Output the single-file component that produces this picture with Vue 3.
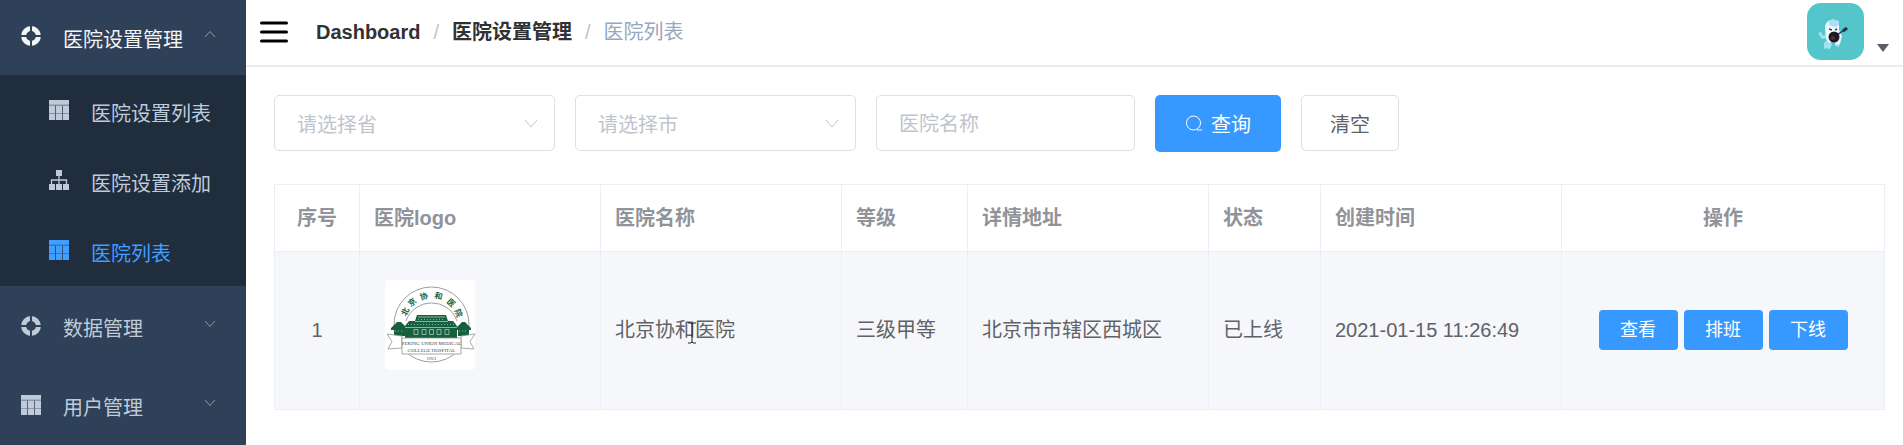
<script setup>
import { ref } from 'vue'

const province = ref('')
const city = ref('')
const hospitalName = ref('')

const groups = [
  {
    title: '医院设置管理',
    icon: 'ring',
    open: true,
    children: [
      { title: '医院设置列表', icon: 'table' },
      { title: '医院设置添加', icon: 'tree' },
      { title: '医院列表', icon: 'table', active: true },
    ],
  },
  { title: '数据管理', icon: 'ring', open: false, children: [] },
  { title: '用户管理', icon: 'table', open: false, children: [] },
]

const rows = [
  {
    id: 1,
    name: '北京协和医院',
    level: '三级甲等',
    address: '北京市市辖区西城区',
    status: '已上线',
    created: '2021-01-15 11:26:49',
  },
]

const sealChars = [
  { text: '北', angle: -64 },
  { text: '京', angle: -41 },
  { text: '协', angle: -15 },
  { text: '和', angle: 14 },
  { text: '医', angle: 42 },
  { text: '院', angle: 67 },
]
</script>

<template>
  <div class="layout">
    <nav class="sidebar">
      <section v-for="group in groups" :key="group.title">
        <button type="button" class="group" :class="{ open: group.open }">
          <svg v-if="group.icon === 'ring'" class="icon" viewBox="0 0 20 20">
            <circle cx="10" cy="10" r="7.4" fill="none" stroke="currentColor" stroke-width="5" />
            <path class="ring-gap" d="M10 0v6M10 14v6M0 10h6M14 10h6" />
          </svg>
          <svg v-else class="icon" viewBox="0 0 20 20">
            <path fill="currentColor" opacity=".65" d="M0 0h20v20H0z" />
            <path fill="currentColor" d="M0 0h20v4.500H0zM0 6h6v7H0zM7 6h6v7H7zM14 6h6v7h-6zM0 14h6v6H0zM7 14h6v6H7zM14 14h6v6h-6z" />
            <path class="icon-line" d="M6.500 5.500V20M13.500 5.500V20" />
          </svg>
          <span class="label">{{ group.title }}</span>
          <svg class="arrow" viewBox="0 0 12 8">
            <path :d="group.open ? 'M1 7l5-5.500L11 7' : 'M1 1l5 5.500L11 1'" />
          </svg>
        </button>
        <div v-if="group.children.length" class="submenu">
          <a v-for="item in group.children" :key="item.title" href="#" class="item" :class="{ active: item.active }">
            <svg v-if="item.icon === 'table'" class="icon" viewBox="0 0 20 20">
              <path fill="currentColor" opacity=".65" d="M0 0h20v20H0z" />
              <path fill="currentColor" d="M0 0h20v4.500H0zM0 6h6v7H0zM7 6h6v7H7zM14 6h6v7h-6zM0 14h6v6H0zM7 14h6v6H7zM14 14h6v6h-6z" />
              <path class="icon-line" d="M6.500 5.500V20M13.500 5.500V20" />
            </svg>
            <svg v-else class="icon" viewBox="0 0 20 20">
              <path fill="currentColor" d="M7 0h6v6H7zM0 14h6v6H0zM7 14h6v6H7zM14 14h6v6h-6z" />
              <path fill="none" stroke="currentColor" stroke-width="1.300" d="M10 6v8M2.500 14v-4h15v4" />
            </svg>
            <span class="label">{{ item.title }}</span>
          </a>
        </div>
      </section>
    </nav>

    <div class="main">
      <header class="navbar">
        <button type="button" class="toggle" aria-label="切换菜单">
          <svg viewBox="0 0 28 22"><path d="M1.500 2h25M1.500 11h25M1.500 20h25" /></svg>
        </button>
        <div class="crumbs">
          <a href="#">Dashboard</a>
          <span class="slash">/</span>
          <a href="#">医院设置管理</a>
          <span class="slash">/</span>
          <span class="current">医院列表</span>
        </div>
        <button type="button" class="user" aria-label="用户菜单">
          <svg class="avatar" viewBox="0 0 57 57">
            <rect width="57" height="57" rx="14" fill="#55c5cc" />
            <path fill="#9be4ee" d="M11 30l3-1 2 4 4-2v4l-5 1zM17 40l4-4 4 6-3 5-2-2-3 1zM28 40l5-1-1 5-4-1z" />
            <path fill="#e8f7fd" d="M18 25c0-5 3-8 7-8l7 2v8l3 6-2 8-3 1-3-3-5 1-3-4z" />
            <path fill="#a9def5" d="M22 18l4-2 6 2v4l-4 2-6-2z" />
            <path fill="#fff" d="M20 26h10l1 4-5 5-6-2z" />
            <path stroke="#333b4c" stroke-width="1.500" d="M22 26l3 1M28 27l2-1" />
            <path stroke="#26343f" stroke-width="1.500" d="M30 32l10-7" />
            <path stroke="#26343f" stroke-width="3" d="M36 28l4-3" />
            <circle cx="27" cy="34" r="5.500" fill="#1c1a25" />
            <circle cx="26" cy="35" r="2" fill="#552c35" />
          </svg>
          <svg class="caret" viewBox="0 0 12 8"><path d="M0 0h12L6 8z" /></svg>
        </button>
      </header>

      <main class="content">
        <form class="filters" @submit.prevent>
          <div class="select">
            <select v-model="province" aria-label="省">
              <option value="">请选择省</option>
            </select>
            <svg class="chevron" viewBox="0 0 14 9"><path d="M1 1l6 7 6-7" /></svg>
          </div>
          <div class="select">
            <select v-model="city" aria-label="市">
              <option value="">请选择市</option>
            </select>
            <svg class="chevron" viewBox="0 0 14 9"><path d="M1 1l6 7 6-7" /></svg>
          </div>
          <input v-model="hospitalName" type="text" placeholder="医院名称" aria-label="医院名称" />
          <button type="submit" class="search">
            <svg viewBox="0 0 18 18">
              <circle cx="8.500" cy="8" r="7" />
              <path d="M12 15h5" />
            </svg>
            <span>查询</span>
          </button>
          <button type="reset" class="clear">清空</button>
        </form>

        <table>
          <colgroup>
            <col class="c-index" />
            <col />
            <col />
            <col class="c-level" />
            <col />
            <col class="c-status" />
            <col />
            <col class="c-actions" />
          </colgroup>
          <thead>
            <tr>
              <th class="center">序号</th>
              <th>医院logo</th>
              <th>医院名称</th>
              <th>等级</th>
              <th>详情地址</th>
              <th>状态</th>
              <th>创建时间</th>
              <th class="center">操作</th>
            </tr>
          </thead>
          <tbody>
            <tr v-for="row in rows" :key="row.id">
              <td class="center">{{ row.id }}</td>
              <td>
                <svg class="seal" viewBox="0 0 90 90">
                  <rect width="90" height="90" rx="4" fill="#fff" />
                  <g fill="none" stroke="#8c9791" stroke-width=".9">
                    <circle cx="46.500" cy="44.500" r="37.500" />
                    <path d="M21 41a27 27 0 0 1 51 0" />
                  </g>
                  <g class="seal-chars">
                    <text
                      v-for="c in sealChars"
                      :key="c.text"
                      x="46.500"
                      y="18"
                      :transform="`rotate(${c.angle} 46.5 44.5)`"
                    >{{ c.text }}</text>
                  </g>
                  <g fill="#17603f">
                    <path d="M32 35h29l2 6h5l4 5v13H20V46l4-5h6z" />
                    <path d="M6 48l6-6h4l6 6v2h-2v6H9v-6H6zM71 48l6-6h3l6 6v2h-2v6H73v-6h-2z" />
                  </g>
                  <g stroke="#a8cabb" fill="none" stroke-width=".8">
                    <path d="M30 41.500h33M20 47.500h52M33 37h27" />
                    <path d="M29 49.500h4v5h-4zM37 49.500h4v5h-4zM44.500 49.500h4v5h-4zM52 49.500h4v5h-4zM60 49.500h4v5h-4z" />
                    <path stroke-dasharray="1 2" d="M33 39.500h27M23 44.500h46M10 51h9M74 51h9" />
                  </g>
                  <g fill="#fff" stroke="#8c9791" stroke-width=".8">
                    <path d="M17 56L2 54l5 7.500L3 69l14-1zM76 56l14-2-5 7.500 4 7.500-13-1z" />
                    <path d="M17 58h59v16H17z" />
                  </g>
                  <g class="seal-text">
                    <text x="46.500" y="64.500">PEKING UNION MEDICAL</text>
                    <text x="46.500" y="72">COLLEGE HOSPITAL</text>
                    <text x="46.500" y="79.500">1921</text>
                  </g>
                </svg>
              </td>
              <td>
                <span class="name">
                  {{ row.name }}
                  <svg class="ibeam" viewBox="0 0 10 22">
                    <path d="M1 1h3l1 1 1-1h3M5 2v18M1 21h3l1-1 1 1h3" />
                  </svg>
                </span>
              </td>
              <td>{{ row.level }}</td>
              <td>{{ row.address }}</td>
              <td>{{ row.status }}</td>
              <td>{{ row.created }}</td>
              <td>
                <div class="actions">
                  <button type="button">查看</button>
                  <button type="button">排班</button>
                  <button type="button">下线</button>
                </div>
              </td>
            </tr>
          </tbody>
        </table>
      </main>
    </div>
  </div>
</template>

<style>
body {
  margin: 0;
  background: #fff;
}
</style>

<style scoped>
.layout {
  display: flex;
  min-height: 100vh;
  font-family: "Liberation Sans", "Noto Sans CJK SC", sans-serif;
  font-size: 20px;
  line-height: 28px;
  color: #606266;
}

.layout * {
  box-sizing: border-box;
}

button,
input,
select {
  font: inherit;
  margin: 0;
}

button {
  cursor: pointer;
}

svg {
  display: block;
  flex: none;
}

/* sidebar */
.sidebar {
  flex: none;
  width: 246px;
  background: #2f4158;
}

.group {
  display: flex;
  align-items: center;
  width: 100%;
  height: 79px;
  padding: 0 30px 0 21px;
  border: 0;
  background: none;
  color: #bfcbd9;
  text-align: left;
}

.group.open {
  height: 75px;
  padding-bottom: 3px;
  color: #f4f4f5;
}

.icon {
  width: 20px;
  height: 20px;
}

.icon-line {
  stroke: #1f2d3d;
  stroke-opacity: .5;
}

.ring-gap {
  stroke: #2f4158;
  stroke-width: 2;
}

.label {
  margin-left: 22px;
  padding-top: 7px;
}

.arrow {
  width: 12px;
  height: 8px;
  margin: 0 0 4px auto;
  fill: none;
  stroke: #909aa8;
}

.submenu {
  padding-bottom: 1px;
  background: #1f2d3d;
}

.item {
  display: flex;
  align-items: center;
  height: 70px;
  padding-left: 49px;
  color: #bfcbd9;
  text-decoration: none;
}

.item.active {
  color: #409eff;
}

/* top bar */
.main {
  flex: 1;
  min-width: 0;
}

.navbar {
  display: flex;
  align-items: center;
  height: 67px;
  padding: 0 14px 2px;
  border-bottom: 2px solid #ededee;
}

.toggle {
  padding: 0;
  border: 0;
  background: none;
}

.toggle svg {
  width: 28px;
  height: 22px;
  fill: none;
  stroke: #000;
  stroke-width: 3;
  stroke-linecap: round;
}

.crumbs {
  display: flex;
  gap: 13px;
  margin-left: 28px;
}

.crumbs a {
  color: #303133;
  font-weight: 700;
  text-decoration: none;
}

.slash {
  color: #c0c4cc;
}

.current {
  color: #97a8be;
}

.user {
  display: flex;
  align-items: flex-end;
  gap: 13px;
  margin-left: auto;
  padding: 0;
  border: 0;
  background: none;
}

.avatar {
  width: 57px;
  height: 57px;
}

.caret {
  width: 12px;
  height: 8px;
  margin-bottom: 8px;
  fill: #5a5e66;
}

/* filters */
.content {
  padding: 28px 18px 28px 28px;
}

.filters {
  display: flex;
  align-items: flex-start;
  gap: 20px;
}

.select {
  display: grid;
  align-items: center;
  width: 281px;
}

.select select,
.select .chevron {
  grid-area: 1 / 1;
}

.select select,
.filters input {
  width: 100%;
  height: 56px;
  padding: 3px 22px 0;
  border: 1px solid #dcdfe6;
  border-radius: 5px;
  background: #fff;
  color: #c0c4cc;
  appearance: none;
  outline: 0;
}

.filters input {
  width: 259px;
  color: #606266;
}

.filters input::placeholder {
  color: #c0c4cc;
}

.chevron {
  justify-self: end;
  width: 14px;
  height: 9px;
  margin-right: 17px;
  fill: none;
  stroke: #c0c4cc;
  pointer-events: none;
}

.search,
.clear {
  display: flex;
  align-items: center;
  justify-content: center;
  padding: 3px 0 0;
  border-radius: 5px;
}

.search {
  gap: 8px;
  width: 126px;
  height: 57px;
  border: 0;
  background: #3799ff;
  color: #fff;
}

.search svg {
  width: 18px;
  height: 18px;
  margin-bottom: 2px;
  fill: none;
  stroke: #fff;
}

.clear {
  width: 98px;
  height: 56px;
  border: 1px solid #dcdfe6;
  background: #fff;
  color: #606266;
}

/* table */
table {
  width: 100%;
  margin-top: 32px;
  border-collapse: collapse;
  table-layout: fixed;
}

.c-index {
  width: 85px;
}

.c-level {
  width: 126px;
}

.c-status {
  width: 112px;
}

.c-actions {
  width: 323px;
}

th,
td {
  padding: 0 14px;
  border: 1px solid #ebeef5;
  text-align: left;
  white-space: nowrap;
}

th {
  height: 67px;
  color: #909399;
  font-weight: 700;
}

td {
  height: 158px;
  padding-bottom: 2px;
  background: #f5f7fb;
}

th.center,
td.center {
  text-align: center;
}

.seal {
  width: 90px;
  height: 90px;
  margin: 0 0 10px 11px;
}

.seal-chars text {
  fill: #17603f;
  font-family: "Noto Sans CJK SC", sans-serif;
  font-size: 8px;
  font-weight: 700;
  text-anchor: middle;
}

.seal-text text {
  fill: #3f4a45;
  font-family: "Liberation Serif", serif;
  font-size: 5px;
  text-anchor: middle;
}

.name {
  position: relative;
}

.ibeam {
  position: absolute;
  top: 3px;
  left: 72px;
  width: 10px;
  height: 22px;
  fill: none;
  stroke: #222;
}

.actions {
  display: flex;
  justify-content: center;
  gap: 6px;
}

.actions button {
  width: 79px;
  height: 40px;
  padding: 0;
  border: 0;
  border-radius: 4px;
  background: #3799ff;
  color: #fff;
  font-size: 18px;
}
</style>
